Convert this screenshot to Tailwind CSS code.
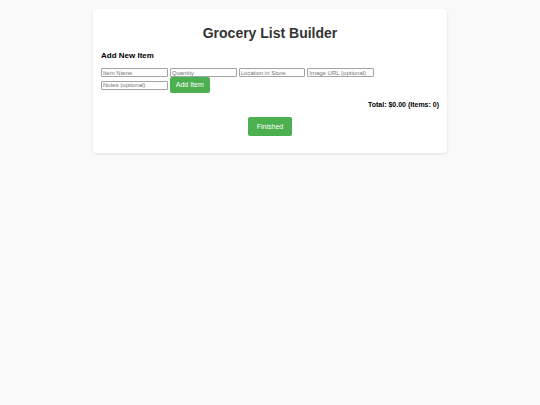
<!DOCTYPE html>
<html lang="en">
<head>
<meta charset="utf-8">
<meta name="viewport" content="width=device-width, initial-scale=1">
<title>Grocery List Builder</title>
<script src="https://cdn.jsdelivr.net/npm/@tailwindcss/browser@4"></script>
</head>
<body class="bg-[#f9f9f9] p-[9px] font-['Liberation_Sans',Arial,sans-serif] text-[7px] leading-[8px] text-black">
<main class="mx-auto max-w-[354px] rounded-[4px] bg-white px-2 pt-4 pb-[17px] shadow-[0_1px_3px_rgba(0,0,0,0.1)]">
  <h1 class="text-center text-[14px] leading-4 font-bold text-[#333]">Grocery List Builder</h1>
  <form>
    <h3 class="mt-[10px] text-[8px] leading-[10px] font-bold">Add New Item</h3>
    <div class="mt-[7px] grid max-w-[273px] grid-cols-4 items-center gap-x-[2px]">
      <input type="text" aria-label="Item Name" placeholder="Item Name" class="h-[9px] w-full min-w-0 rounded-[1px] border border-[#a3a3a3] bg-white px-px text-[6px] leading-[7px] placeholder:text-[#757575]">
      <input type="text" aria-label="Quantity" placeholder="Quantity" class="h-[9px] w-full min-w-0 rounded-[1px] border border-[#a3a3a3] bg-white px-px text-[6px] leading-[7px] placeholder:text-[#757575]">
      <input type="text" aria-label="Location in Store" placeholder="Location in Store" class="h-[9px] w-full min-w-0 rounded-[1px] border border-[#a3a3a3] bg-white px-px text-[6px] leading-[7px] placeholder:text-[#757575]">
      <input type="text" aria-label="Image URL (optional)" placeholder="Image URL (optional)" class="h-[9px] w-full min-w-0 rounded-[1px] border border-[#a3a3a3] bg-white px-px text-[6px] leading-[7px] placeholder:text-[#757575]">
      <input type="text" aria-label="Notes (optional)" placeholder="Notes (optional)" class="h-[9px] w-full min-w-0 rounded-[1px] border border-[#a3a3a3] bg-white px-px text-[6px] leading-[7px] placeholder:text-[#757575]">
      <button type="button" class="justify-self-start rounded-[2px] bg-[#4caf50] px-[6px] py-1 text-white">Add Item</button>
    </div>
  </form>
  <p class="mt-2 text-right font-bold">Total: $0.00 (Items: 0)</p>
  <button type="button" class="mx-auto mt-2 block rounded-[2px] bg-[#4caf50] px-[9px] py-[5px] leading-[9px] text-white">Finished</button>
</main>
</body>
</html>
